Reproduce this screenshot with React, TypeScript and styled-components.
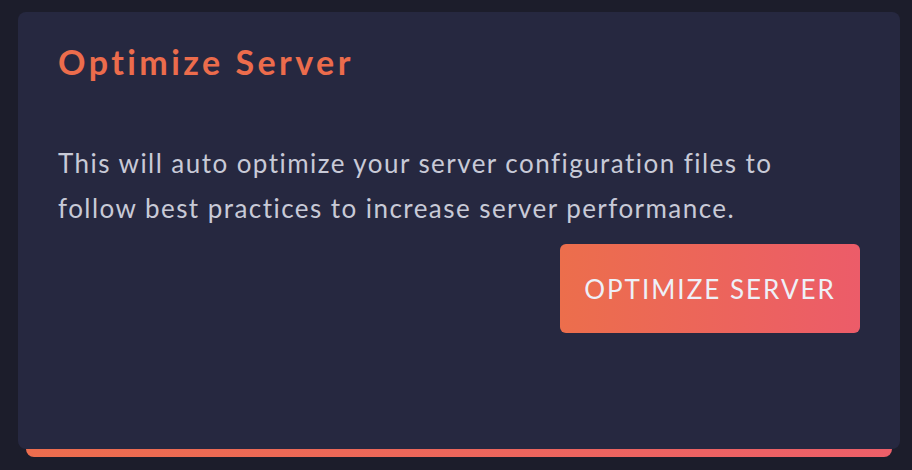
import styled, { createGlobalStyle } from "styled-components";

const GlobalStyle = createGlobalStyle`
    html, body {
        margin: 0;
        padding: 0;
        background: #1c1d2b;
    }
    body {
        font-family: Lato, "Open Sans", sans-serif;
    }
`;

const Page = styled.div`
    width: 912px;
    height: 470px;
    box-sizing: border-box;
    padding: 12px 12px 0 18px;
`;

const Frame = styled.div`
    display: flex;
    flex-direction: column;
    width: 882px;
`;

const Card = styled.section`
    position: relative;
    z-index: 1;
    height: 437px;
    box-sizing: border-box;
    padding: 30px 40px 0 40px;
    background: #262840;
    border-radius: 8px;
    display: flex;
    flex-direction: column;
`;

const Accent = styled.div`
    height: 8px;
    margin: 0 8px;
    border-radius: 0 0 8px 8px;
    background: linear-gradient(90deg, #ec6d4e 0%, #ec5f69 100%);
`;

const Title = styled.h2`
    margin: 0;
    font-size: 34px;
    line-height: 40px;
    font-weight: 700;
    color: #ec6c4c;
    letter-spacing: 3.45px;
`;

const Body = styled.p`
    margin: 59px 0 0 0;
    font-size: 26px;
    line-height: 45px;
    color: #c8cad7;
    letter-spacing: 1.45px;
`;

const Actions = styled.div`
    display: flex;
    justify-content: flex-end;
    margin-top: 13px;
`;

const Button = styled.button`
    width: 300px;
    height: 89px;
    border: none;
    border-radius: 6px;
    background: linear-gradient(90deg, #ec6e4c 0%, #ec5c69 100%);
    color: #eef0f8;
    font-family: Lato, "Open Sans", sans-serif;
    font-size: 26px;
    letter-spacing: 2px;
    text-transform: uppercase;
    cursor: pointer;
`;

export default function App() {
    return (
        <>
            <GlobalStyle />
            <Page>
                <Frame>
                    <Card>
                        <Title>Optimize Server</Title>
                        <Body>
                            This will auto optimize your server configuration files to
                            <br />
                            follow best practices to increase server performance.
                        </Body>
                        <Actions>
                            <Button>Optimize Server</Button>
                        </Actions>
                    </Card>
                    <Accent />
                </Frame>
            </Page>
        </>
    );
}
